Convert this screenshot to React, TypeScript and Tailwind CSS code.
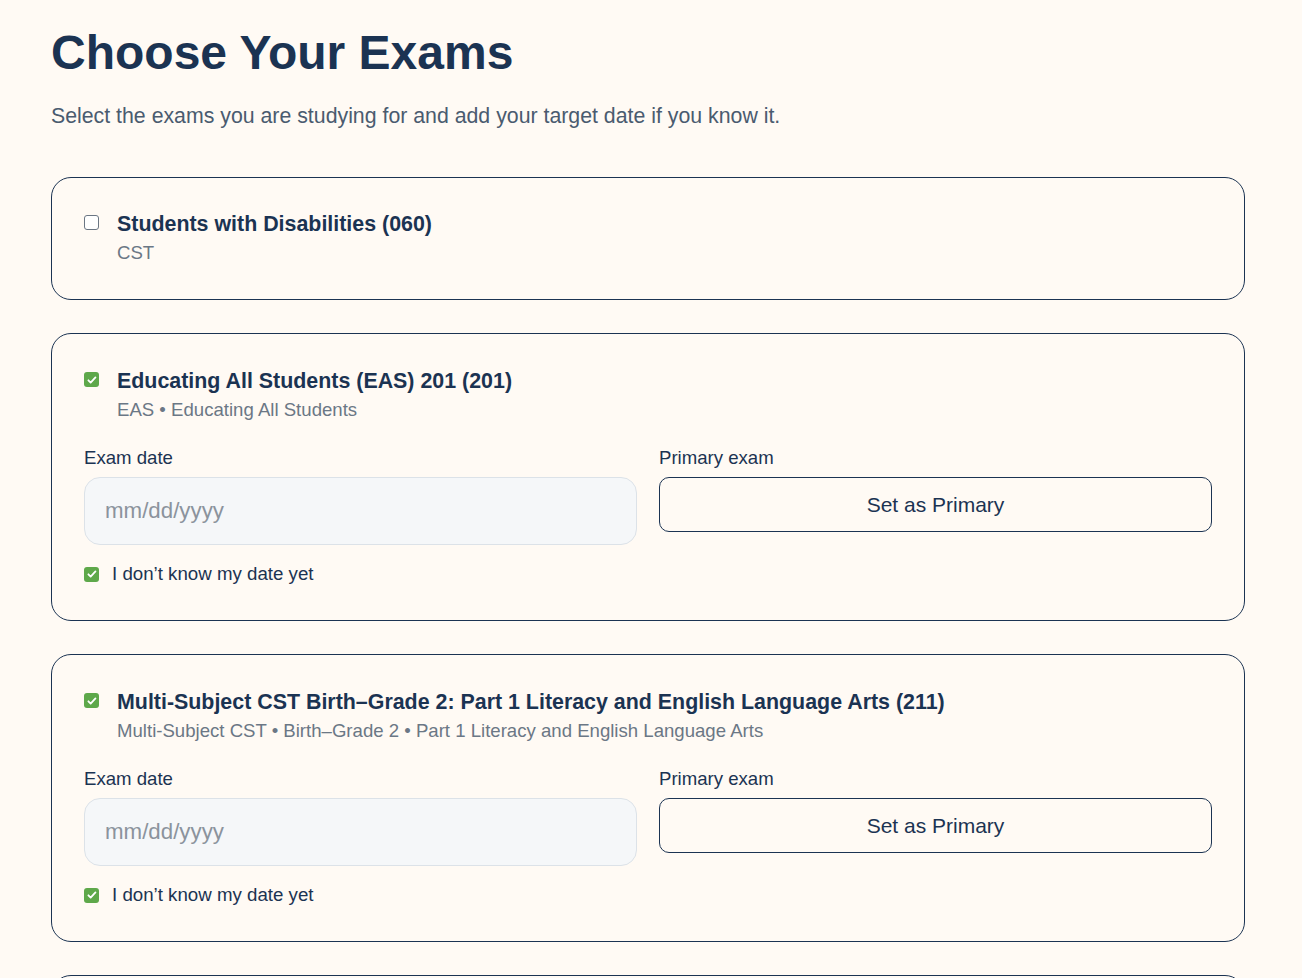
import React from "react";

type Exam = {
  title: string;
  meta: string;
  selected: boolean;
};

const exams: Exam[] = [
  { title: "Students with Disabilities (060)", meta: "CST", selected: false },
  {
    title: "Educating All Students (EAS) 201 (201)",
    meta: "EAS • Educating All Students",
    selected: true,
  },
  {
    title: "Multi-Subject CST Birth–Grade 2: Part 1 Literacy and English Language Arts (211)",
    meta: "Multi-Subject CST • Birth–Grade 2 • Part 1 Literacy and English Language Arts",
    selected: true,
  },
  {
    title: "Multi-Subject CST Birth–Grade 2: Part 2 Mathematics (212)",
    meta: "Multi-Subject CST • Birth–Grade 2 • Part 2 Mathematics",
    selected: true,
  },
];

const Box: React.FC<{ checked: boolean }> = ({ checked }) =>
  checked ? (
    <span className="flex h-[15px] w-[15px] shrink-0 items-center justify-center rounded-[3px] bg-[#5ea84a]">
      <svg viewBox="0 0 16 16" className="h-[12px] w-[12px]" fill="none">
        <path d="M3.2 8.4l3 3 6.4-6.8" stroke="#ffffff" strokeWidth="2.4" strokeLinecap="round" strokeLinejoin="round" />
      </svg>
    </span>
  ) : (
    <span className="block h-[15px] w-[15px] shrink-0 rounded-[3px] border border-[#6b7683] bg-white" />
  );

const ExamCard: React.FC<{ exam: Exam }> = ({ exam }) => (
  <div
    className={
      exam.selected
        ? "rounded-[20px] border border-[#1b3352] px-[32px] pt-[33px] pb-[33px]"
        : "rounded-[20px] border border-[#1b3352] px-[32px] pt-[32px] pb-[33px]"
    }
  >
    <div className="flex items-start gap-[18px]">
      <div className="pt-[5px]">
        <Box checked={exam.selected} />
      </div>
      <div>
        <div className="text-[21.4px] font-bold leading-[28px] text-[#1b3352]">{exam.title}</div>
        <div className="mt-[2px] text-[18.6px] leading-[26px] text-[#6b7785]">{exam.meta}</div>
      </div>
    </div>

    {exam.selected && (
      <>
        <div className="mt-[24px] grid grid-cols-2 gap-[22px]">
          <div>
            <div className="text-[18.6px] leading-[22px] text-[#1b3352]">Exam date</div>
            <div className="mt-[8px] flex h-[68px] items-center rounded-[16px] border border-[#dce2e8] bg-[#f5f7f9] px-[20px] text-[22.3px] text-[#8b939d]">
              mm/dd/yyyy
            </div>
          </div>
          <div>
            <div className="text-[18.6px] leading-[22px] text-[#1b3352]">Primary exam</div>
            <button className="mt-[8px] flex h-[55px] w-full items-center justify-center rounded-[10px] border border-[#1b3352] text-[21px] text-[#1b3352]">
              Set as Primary
            </button>
          </div>
        </div>
        <div className="mt-[16px] flex items-center gap-[13px]">
          <Box checked />
          <span className="text-[18.7px] leading-[26px] text-[#1b3352]">I don’t know my date yet</span>
        </div>
      </>
    )}
  </div>
);

const App: React.FC = () => {
  return (
    <div
      className="min-h-screen bg-[#fffaf4] pl-[51px] pt-[29px] pb-16"
      style={{ fontFamily: '"Liberation Sans", Arial, sans-serif' }}
    >
      <div className="w-[1194px]">
        <h1 className="text-[48px] font-bold leading-none text-[#1b3352]">Choose Your Exams</h1>
        <p className="mt-[25px] text-[21.3px] leading-[28px] text-[#4a5b6f]">
          Select the exams you are studying for and add your target date if you know it.
        </p>

        <div className="mt-[47px] flex flex-col gap-[33px]">
          {exams.map((exam) => (
            <ExamCard key={exam.title} exam={exam} />
          ))}
        </div>
      </div>
    </div>
  );
};

export default App;
